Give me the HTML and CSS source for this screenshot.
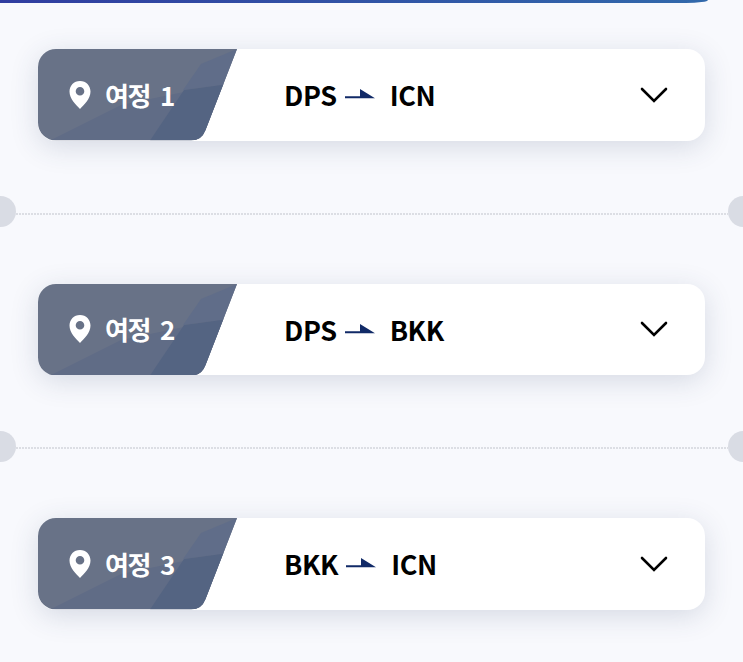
FILE: index.html
```html
<!DOCTYPE html>
<html lang="ko">
<head>
<meta charset="utf-8">
<title>여정</title>
<link rel="stylesheet" href="styles.css">
</head>
<body>
<svg class="defs" aria-hidden="true">
  <symbol id="label-shape" viewBox="0 0 199 91.5">
    <clipPath id="label-clip"><path d="M18 0H199L167.5 81Q163.5 91.5 153 91.5H18A18 18 0 0 1 0 73.500V18A18 18 0 0 1 18 0Z"/></clipPath>
    <g clip-path="url(#label-clip)">
      <path fill="#687287" d="M0 0H199V91.500H0Z"/>
      <path fill="#606c86" d="M12 91.500L83 56L199 32V91.500Z"/>
      <path fill="#606d89" d="M199 0L163 15L145 41L199 34Z"/>
      <path fill="#546482" d="M112 91.500L146 41L199 34V91.500Z"/>
    </g>
  </symbol>
  <symbol id="pin" viewBox="0 0 22 28">
    <path fill="#fff" fill-rule="evenodd" d="M11 0C4.800 0 .5 4.700 .5 10.500C.5 18 7 23.500 11 28C15 23.500 21.500 18 21.500 10.500C21.500 4.700 17.200 0 11 0ZM11 6A4.300 4.300 0 1 1 11 14.600A4.300 4.300 0 0 1 11 6Z"/>
  </symbol>
  <symbol id="arrow" viewBox="0 0 30 10">
    <path fill="#112a67" d="M0 7.300H15V0L30 9.200H0Z"/>
  </symbol>
  <symbol id="chevron" viewBox="0 0 28 16">
    <path fill="none" stroke="#000" stroke-width="2.600" stroke-linecap="round" d="M2 2L14 14L26 2"/>
  </symbol>
</svg>
<header class="banner"></header>
<main class="trips">
  <section class="trip">
    <article class="card">
      <div class="label"><svg class="label-bg"><use href="#label-shape"/></svg><svg class="pin"><use href="#pin"/></svg><span class="label-text">여정 1</span></div>
      <div class="route"><span>DPS</span><svg class="arrow"><use href="#arrow"/></svg><span>ICN</span></div>
      <svg class="chevron"><use href="#chevron"/></svg>
    </article>
    <div class="divider"><i class="notch"></i><i class="dots"></i><i class="notch"></i></div>
  </section>
  <section class="trip">
    <article class="card">
      <div class="label"><svg class="label-bg"><use href="#label-shape"/></svg><svg class="pin"><use href="#pin"/></svg><span class="label-text">여정 2</span></div>
      <div class="route"><span>DPS</span><svg class="arrow"><use href="#arrow"/></svg><span>BKK</span></div>
      <svg class="chevron"><use href="#chevron"/></svg>
    </article>
    <div class="divider"><i class="notch"></i><i class="dots"></i><i class="notch"></i></div>
  </section>
  <section class="trip">
    <article class="card">
      <div class="label"><svg class="label-bg"><use href="#label-shape"/></svg><svg class="pin"><use href="#pin"/></svg><span class="label-text">여정 3</span></div>
      <div class="route"><span>BKK</span><svg class="arrow"><use href="#arrow"/></svg><span>ICN</span></div>
      <svg class="chevron"><use href="#chevron"/></svg>
    </article>
  </section>
</main>
</body>
</html>
```
FILE: styles.css
```css
* { box-sizing: border-box; }
body {
  margin: 0;
  height: 662px;
  overflow: hidden;
  background: #f8f9fd;
  font-family: "Noto Sans CJK KR", sans-serif;
}
.defs { position: absolute; width: 0; height: 0; }
.banner {
  width: 708px;
  height: 3px;
  background: linear-gradient(90deg, #303da0, #3269ab);
  border-bottom-right-radius: 22px 3px;
}
.trips { padding-top: 46px; }
.trip { height: 234.500px; }
.trip:last-child { height: auto; }
.card {
  display: flex;
  align-items: center;
  width: 667px;
  height: 91.500px;
  margin-left: 38px;
  padding-right: 37.500px;
  border-radius: 18px;
  background: #fff;
  box-shadow: 0 6px 28px rgba(50, 65, 100, 0.17);
}
.label {
  position: relative;
  display: flex;
  align-items: center;
  width: 199px;
  height: 100%;
  padding-left: 31px;
  gap: 14px;
}
.label-bg { position: absolute; inset: 0; width: 199px; height: 91.500px; }
.pin { position: relative; width: 22px; height: 28px; }
.label-text {
  position: relative;
  color: #fff;
  font-size: 26px;
  font-weight: 700;
  line-height: 40px;
  letter-spacing: -1.500px;
  word-spacing: 4.500px;
  white-space: nowrap;
}
.route {
  display: flex;
  align-items: center;
  flex: 1;
  padding-left: 47px;
  color: #000;
  font-size: 27px;
  font-weight: 700;
  line-height: 40px;
  letter-spacing: -0.400px;
}
.route span { padding-top: 1px; }
.arrow { width: 30px; height: 10px; margin: 0 15px 1px 8px; }
.chevron { width: 28px; height: 16px; }
.divider {
  display: flex;
  align-items: center;
  justify-content: space-between;
  height: 31px;
  margin: 55.500px -15.500px 0;
}
.notch { width: 31px; height: 31px; border-radius: 50%; background: #d9dce4; }
.dots {
  flex: 1;
  height: 2px;
  margin-top: 4px;
  background: repeating-linear-gradient(90deg, #dcdee4 0 2px, transparent 2px 3px);
}
```
